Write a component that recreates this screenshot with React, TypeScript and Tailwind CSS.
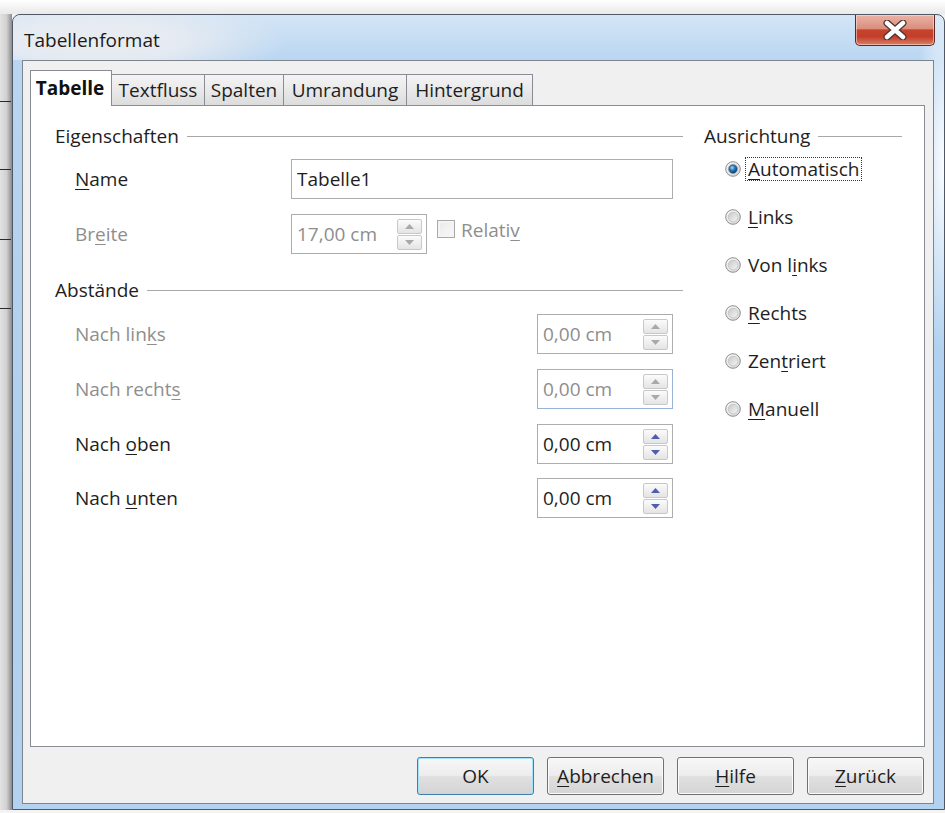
import React from "react";

function Mn({ text, at }: { text: string; at: number }) {
  return (
    <>
      {text.slice(0, at)}
      <span className="underline decoration-1 underline-offset-[3px]">{text.charAt(at)}</span>
      {text.slice(at + 1)}
    </>
  );
}

function Arrow({ up, enabled }: { up: boolean; enabled: boolean }) {
  return (
    <svg width="9" height="5" viewBox="0 0 9 5">
      <path d={up ? "M0 5 L4.5 0 L9 5 Z" : "M0 0 L4.5 5 L9 0 Z"} fill={enabled ? "#4d5eb0" : "#a9a9a9"} />
    </svg>
  );
}

function SpinButtons({ enabled }: { enabled: boolean }) {
  return (
    <div className="flex w-[25px] flex-col gap-px">
      {[true, false].map((up) => (
        <div
          key={up ? "up" : "down"}
          className="flex h-[15px] items-center justify-center rounded-[2px] border border-[#c8c8c8] bg-[linear-gradient(#fbfbfb,#e4e4e4)]"
        >
          <Arrow up={up} enabled={enabled} />
        </div>
      ))}
    </div>
  );
}

function SpinField({ value, enabled, hover }: { value: string; enabled: boolean; hover?: boolean }) {
  return (
    <div
      className={`flex h-[40px] w-[136px] items-center justify-between border bg-white pl-[5px] pr-[4px] ${
        hover ? "border-[#98b4d4]" : "border-[#adadad]"
      }`}
    >
      <span className={enabled ? "text-[#1e1e1e]" : "text-[#8e8e8e]"}>{value}</span>
      <SpinButtons enabled={enabled} />
    </div>
  );
}

function Radio({ checked }: { checked?: boolean }) {
  return (
    <svg width="16" height="16" viewBox="0 0 16 16" className="shrink-0">
      <defs>
        <linearGradient id="radioOuter" x1="0" y1="0" x2="1" y2="1">
          <stop offset="0" stopColor="#fdfdfd" />
          <stop offset="1" stopColor="#d3d3d3" />
        </linearGradient>
        <linearGradient id="radioInner" x1="0" y1="0" x2="1" y2="1">
          <stop offset="0" stopColor="#c6c6c6" />
          <stop offset="1" stopColor="#f7f7f7" />
        </linearGradient>
        <radialGradient id="radioDot" cx="0.4" cy="0.35" r="0.7">
          <stop offset="0" stopColor="#a9d6f8" />
          <stop offset="0.45" stopColor="#2c78bb" />
          <stop offset="1" stopColor="#0b365f" />
        </radialGradient>
      </defs>
      <circle cx="8" cy="8" r="7.3" fill="url(#radioOuter)" stroke="#8d8f91" strokeWidth="1" />
      <circle cx="8" cy="8" r="4.8" fill="url(#radioInner)" stroke="#b9b9b9" strokeWidth="0.6" />
      {checked && <circle cx="8" cy="8" r="4.2" fill="url(#radioDot)" stroke="#1b4f80" strokeWidth="0.5" />}
    </svg>
  );
}

function Heading({ label }: { label: string }) {
  return (
    <div className="flex h-[26px] items-center gap-[8px]">
      <span className="text-[#1e1e1e]">{label}</span>
      <div className="h-px flex-1 bg-[#a8a8a8]" />
    </div>
  );
}

function Btn({ children, primary }: { children: React.ReactNode; primary?: boolean }) {
  return (
    <div
      className={`flex h-[38px] w-[117px] items-center justify-center rounded-[3px] border bg-[linear-gradient(#f7f7f7_0%,#ededed_48%,#e0e0e0_52%,#d4d4d4_100%)] text-[#1e1e1e] ${
        primary
          ? "border-[#3c7fb1] shadow-[inset_0_0_0_1px_#a6e1fa]"
          : "border-[#707070] shadow-[inset_0_0_0_1px_#fbfbfb]"
      }`}
    >
      {children}
    </div>
  );
}

const tabs = [
  { label: "Textfluss", w: "w-[94px]" },
  { label: "Spalten", w: "w-[80px]" },
  { label: "Umrandung", w: "w-[124px]" },
  { label: "Hintergrund", w: "w-[127px]" },
];

const distances = [
  { label: "Nach links", at: 8, enabled: false, mt: "mt-[11px]" },
  { label: "Nach rechts", at: 10, enabled: false, hover: true, mt: "mt-[15px]" },
  { label: "Nach oben", at: 5, enabled: true, mt: "mt-[15px]" },
  { label: "Nach unten", at: 5, enabled: true, mt: "mt-[14px]" },
];

const alignments = [
  { label: "Automatisch", at: 0, checked: true },
  { label: "Links", at: 0 },
  { label: "Von links", at: 5 },
  { label: "Rechts", at: 0 },
  { label: "Zentriert", at: 3 },
  { label: "Manuell", at: 0 },
];

const deskLines = ["mt-[87px]", "mt-[67px]", "mt-[69px]", "mt-[68px]"];

export default function App() {
  return (
    <div className="flex h-[813px] w-[945px] flex-col overflow-hidden bg-[#f3f3f3] font-['Open_Sans','Noto_Sans',sans-serif] text-[19px] leading-[26px]">
      {/* desktop above the window */}
      <div className="h-[14px] shrink-0 bg-[linear-gradient(#ffffff,#e9e9e9)]" />

      <div className="flex h-[796px] shrink-0">
        {/* sliver of the document behind the dialog */}
        <div className="flex w-[12px] shrink-0 flex-col bg-[linear-gradient(90deg,#e2e2e2,#d0d0d0_55%,#8a8a8a)]">
          {deskLines.map((m) => (
            <div key={m} className={`h-px w-[11px] bg-[#2a2a2a] ${m}`} />
          ))}
        </div>

        {/* dialog window */}
        <div className="flex w-[933px] shrink-0 flex-col rounded-t-[8px] border border-[#4f5864] bg-[#accdee] bg-[radial-gradient(ellipse_30px_190px_at_100%_150px,rgba(255,255,255,0.95),rgba(255,255,255,0)),linear-gradient(#d4e5f6_0%,#b8d5f1_6%,#aecfef_60%,#b3d2f0_100%)]">
          {/* title bar */}
          <div className="flex h-[45px] shrink-0 items-start rounded-t-[7px] bg-[radial-gradient(ellipse_190px_46px_at_82px_27px,rgba(234,237,241,1),rgba(234,237,241,0.85)_45%,rgba(234,237,241,0))]">
            <div className="pl-[11px] pt-[12px] text-[#1b1b1b]">Tabellenformat</div>
            <div className="ml-auto mr-[9px] flex h-[31px] w-[80px] items-center justify-center rounded-b-[5px] border border-t-0 border-[#5a2b24] bg-[linear-gradient(#eab3a6_0%,#dc8e7c_45%,#c8432e_50%,#c33e28_72%,#d8806c_100%)] shadow-[inset_0_0_0_1px_rgba(255,230,220,0.55)]">
              <svg width="24" height="20" viewBox="0 0 24 20">
                <path d="M4 3 L20 17 M20 3 L4 17" stroke="#4a3430" strokeWidth="7" strokeLinecap="round" />
                <path d="M4 3 L20 17 M20 3 L4 17" stroke="#ffffff" strokeWidth="4.5" strokeLinecap="round" />
              </svg>
            </div>
          </div>

          {/* client area */}
          <div className="ml-[9px] mr-[10px] flex h-[744px] shrink-0 flex-col border border-[#7d848d] bg-[#f0f0f0] pl-[7px] pr-[8px] pt-[8px]">
            {/* tab strip */}
            <div className="flex h-[36px] items-end">
              <div className="relative z-10 -mb-px flex h-[36px] w-[82px] items-center justify-center border border-b-0 border-[#898c95] bg-white pb-[2px] pr-[2px] font-bold text-[#111]">
                Tabelle
              </div>
              {tabs.map((t) => (
                <div
                  key={t.label}
                  className={`-ml-px flex h-[31px] items-center justify-center border border-b-0 border-[#898c95] bg-[linear-gradient(#f4f4f4,#e9e9e9_50%,#dcdcdc)] text-[#1e1e1e] ${t.w}`}
                >
                  {t.label}
                </div>
              ))}
            </div>

            {/* tab page */}
            <div className="flex h-[642px] border border-[#898c95] bg-white pl-[24px] pt-[17px]">
              {/* left column */}
              <div className="flex w-[628px] flex-col">
                <Heading label="Eigenschaften" />
                <div className="mt-[10px] flex h-[40px] items-center justify-between pl-[20px] pr-[10px]">
                  <span className="text-[#1e1e1e]">
                    <Mn text="Name" at={0} />
                  </span>
                  <div className="flex h-[40px] w-[382px] items-center border border-[#adadad] bg-white pl-[5px] text-[#1e1e1e]">
                    Tabelle1
                  </div>
                </div>
                <div className="mt-[15px] flex h-[40px] items-center pl-[20px]">
                  <span className="w-[216px] text-[#8e8e8e]">
                    <Mn text="Breite" at={2} />
                  </span>
                  <SpinField value="17,00 cm" enabled={false} />
                  <div className="ml-[10px] mt-[-10px] h-[18px] w-[18px] border border-[#a9a9a9] bg-[linear-gradient(135deg,#e8e8e8,#fafafa)] shadow-[inset_0_0_0_2px_#f4f4f4]" />
                  <span className="ml-[6px] mt-[-8px] text-[#8e8e8e]">
                    <Mn text="Relativ" at={6} />
                  </span>
                </div>

                <div className="mt-[23px]">
                  <Heading label="Abstände" />
                </div>
                {distances.map((d) => (
                  <div key={d.label} className={`flex h-[40px] items-center justify-between pl-[20px] pr-[10px] ${d.mt}`}>
                    <span className={d.enabled ? "text-[#1e1e1e]" : "text-[#8e8e8e]"}>
                      <Mn text={d.label} at={d.at} />
                    </span>
                    <SpinField value="0,00 cm" enabled={d.enabled} hover={d.hover} />
                  </div>
                ))}
              </div>

              {/* right column */}
              <div className="ml-[21px] flex w-[198px] flex-col">
                <Heading label="Ausrichtung" />
                <div className="mt-[6px] flex flex-col gap-[20px] pl-[21px]">
                  {alignments.map((a) => (
                    <div key={a.label} className="flex h-[28px] items-center">
                      <Radio checked={a.checked} />
                      <span
                        className={`ml-[4px] flex h-[24px] items-center border px-[2px] text-[#1e1e1e] ${
                          a.checked ? "border-dotted border-[#333]" : "border-transparent"
                        }`}
                      >
                        <Mn text={a.label} at={a.at} />
                      </span>
                    </div>
                  ))}
                </div>
              </div>
            </div>

            {/* dialog buttons */}
            <div className="mt-[10px] flex justify-end gap-[13px] pr-[1px]">
              <Btn primary>OK</Btn>
              <Btn>
                <Mn text="Abbrechen" at={0} />
              </Btn>
              <Btn>
                <Mn text="Hilfe" at={0} />
              </Btn>
              <Btn>
                <Mn text="Zurück" at={0} />
              </Btn>
            </div>
          </div>
        </div>
      </div>
    </div>
  );
}
